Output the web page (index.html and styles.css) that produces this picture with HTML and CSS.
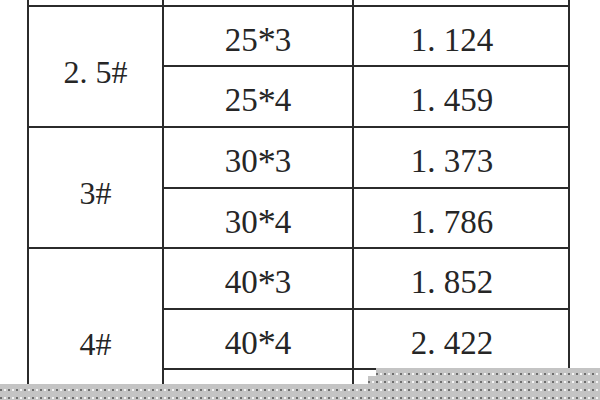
FILE: index.html
```html
<!DOCTYPE html>
<html lang="zh">
<head>
<meta charset="utf-8">
<title>规格表</title>
<link rel="stylesheet" href="styles.css">
</head>
<body>
<div class="page">
  <div class="grid">
    <div class="cell top"></div>
    <div class="cell top"></div>
    <div class="cell top"></div>

    <div class="cell group g1">2<span class="dot">.</span>5#</div>
    <div class="cell spec r2">25<span class="ast">*</span>3</div>
    <div class="cell val r2">1<span class="dot">.</span>124</div>
    <div class="cell spec r3">25<span class="ast">*</span>4</div>
    <div class="cell val r3">1<span class="dot">.</span>459</div>

    <div class="cell group g2">3#</div>
    <div class="cell spec r4">30<span class="ast">*</span>3</div>
    <div class="cell val r4">1<span class="dot">.</span>373</div>
    <div class="cell spec r5">30<span class="ast">*</span>4</div>
    <div class="cell val r5">1<span class="dot">.</span>786</div>

    <div class="cell group g3">4#</div>
    <div class="cell spec r6">40<span class="ast">*</span>3</div>
    <div class="cell val r6">1<span class="dot">.</span>852</div>
    <div class="cell spec r7">40<span class="ast">*</span>4</div>
    <div class="cell val r7">2<span class="dot">.</span>422</div>
    <div class="cell spec r8"></div>
    <div class="cell val r8"></div>
  </div>
  <div class="mask mask-a"></div>
  <div class="mask mask-b"></div>
  <div class="mask mask-c"></div>
</div>
</body>
</html>
```
FILE: styles.css
```css
html, body {
  margin: 0;
  padding: 0;
  background: #ffffff;
}

.page {
  position: relative;
  width: 600px;
  height: 400px;
  overflow: hidden;
  background: #ffffff;
}

.grid {
  margin-left: 27px;
  width: 543px;
  display: grid;
  grid-template-columns: 133px 188px 214px;
  grid-template-rows: 5px 58px 59px 59px 58px 59px 58px 59px;
  gap: 2px;
  padding: 0 2px 2px 2px;
  box-sizing: border-box;
  background: #2b2b2b;
}

.cell {
  background: #ffffff;
  display: flex;
  align-items: center;
  justify-content: center;
  font-family: "Liberation Serif", "Noto Sans CJK SC", serif;
  font-size: 33px;
  line-height: 1;
  color: #262626;
  padding-top: 8px;
  box-sizing: border-box;
}

.cell.top {
  padding: 0;
}

.group {
  grid-column: 1;
  font-size: 32px;
  padding-top: 10px;
}

.g1 { grid-row: 2 / 4; }
.g2 { grid-row: 4 / 6; }
.g3 { grid-row: 6 / 9; }

.spec { grid-column: 2; }
.val {
  grid-column: 3;
  padding-right: 18px;
}

.r2 { grid-row: 2; }
.r3 { grid-row: 3; }
.r4 { grid-row: 4; }
.r5 { grid-row: 5; }
.r6 { grid-row: 6; }
.r7 { grid-row: 7; }
.r8 { grid-row: 8; }

.dot {
  display: inline-block;
  width: 0.5em;
}

.ast {
  display: inline-block;
  width: 17px;
  text-align: center;
  font-size: 36px;
  line-height: 1;
  vertical-align: -0.3em;
}

.mask {
  position: absolute;
  right: 0;
  bottom: 0;
  background-color: #c4c4c4;
  background-image:
    radial-gradient(circle, #f4f4f4 0.9px, transparent 1.3px),
    radial-gradient(circle, #6e6e6e 0.9px, transparent 1.3px);
  background-size: 8px 8px, 8px 8px;
  background-position: 1px 2px, 5px 2px;
}

.mask-a {
  left: 0;
  top: 384px;
}

.mask-b {
  left: 368px;
  top: 376px;
}

.mask-c {
  left: 376px;
  top: 368px;
}
```
